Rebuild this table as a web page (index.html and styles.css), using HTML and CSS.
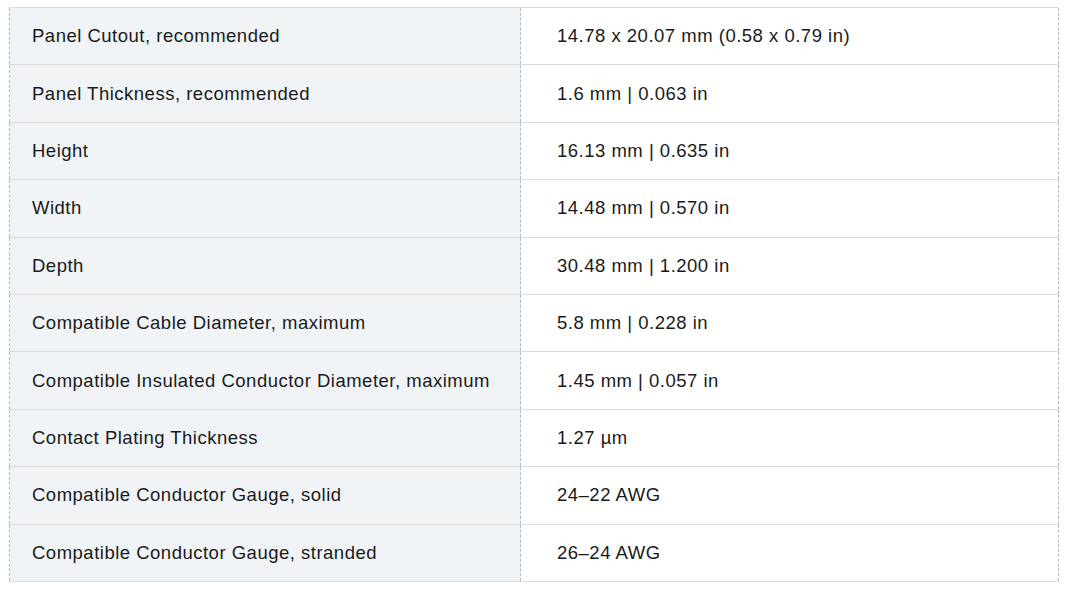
FILE: index.html
```html
<!DOCTYPE html>
<html>
<head>
<meta charset="utf-8">
<link rel="stylesheet" href="styles.css">
</head>
<body>
<table class="specs">
<tbody>
<tr><th>Panel Cutout, recommended</th><td>14.78 x 20.07 mm (0.58 x 0.79 in)</td></tr>
<tr><th>Panel Thickness, recommended</th><td>1.6 mm | 0.063 in</td></tr>
<tr><th>Height</th><td>16.13 mm | 0.635 in</td></tr>
<tr><th>Width</th><td>14.48 mm | 0.570 in</td></tr>
<tr><th>Depth</th><td>30.48 mm | 1.200 in</td></tr>
<tr><th>Compatible Cable Diameter, maximum</th><td>5.8 mm | 0.228 in</td></tr>
<tr><th>Compatible Insulated Conductor Diameter, maximum</th><td>1.45 mm | 0.057 in</td></tr>
<tr><th>Contact Plating Thickness</th><td>1.27 µm</td></tr>
<tr><th>Compatible Conductor Gauge, solid</th><td>24–22 AWG</td></tr>
<tr><th>Compatible Conductor Gauge, stranded</th><td>26–24 AWG</td></tr>
</tbody>
</table>
</body>
</html>
```
FILE: styles.css
```css
html, body {
  margin: 0;
  padding: 0;
  background: #ffffff;
}
body {
  padding: 7px 0 0 9px;
  font-family: "Liberation Sans", Arial, sans-serif;
  color: #1a1a1a;
}
.specs {
  border-collapse: collapse;
  width: 1050px;
  font-size: 18.5px;
  letter-spacing: 0.5px;
}
.specs tr {
  height: 57.4px;
}
.specs th,
.specs td {
  font-weight: normal;
  text-align: left;
  vertical-align: middle;
  padding: 0;
  border-top: 1px solid #dcdcdc;
  border-bottom: 1px solid #dcdcdc;
  line-height: 24px;
}
.specs th {
  width: 488px;
  padding-left: 22px;
  background: #f0f4f7;
  border-left: 1px dashed #b8b8b8;
  border-right: 1px dashed #b8b8b8;
}
.specs td {
  padding-left: 36px;
  border-right: 1px dashed #b8b8b8;
}
```
